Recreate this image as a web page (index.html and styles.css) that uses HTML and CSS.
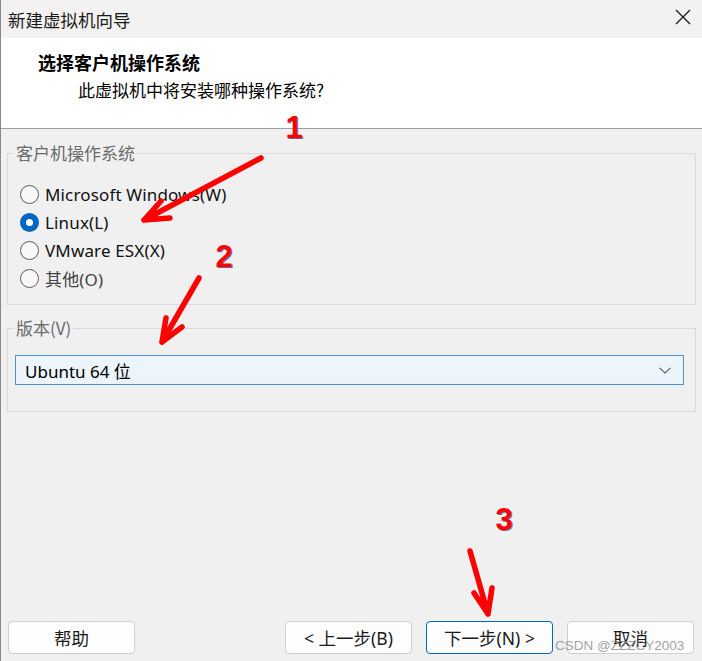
FILE: index.html
```html
<!DOCTYPE html>
<html lang="zh-CN">
<head>
<meta charset="utf-8">
<title>新建虚拟机向导</title>
<link rel="stylesheet" href="styles.css">
</head>
<body>
<div class="window">
  <div class="titlebar">
    <span class="title">新建虚拟机向导</span>
    <svg class="close" width="16" height="16" viewBox="0 0 16 16"><path d="M1 1 L15 15 M15 1 L1 15" stroke="#1e1e1e" stroke-width="1.4" fill="none"/></svg>
  </div>
  <div class="header">
    <div class="h-title">选择客户机操作系统</div>
    <div class="h-sub">此虚拟机中将安装哪种操作系统?</div>
  </div>
  <div class="main">
    <fieldset class="group group-os">
      <legend class="legend">客户机操作系统</legend>
      <div class="options">
        <div class="opt"><span class="radio"></span><span class="opt-text">Microsoft Windows(W)</span></div>
        <div class="opt"><span class="radio checked"></span><span class="opt-text">Linux(L)</span></div>
        <div class="opt"><span class="radio"></span><span class="opt-text">VMware ESX(X)</span></div>
        <div class="opt"><span class="radio"></span><span class="opt-text cjk">其他(O)</span></div>
      </div>
    </fieldset>
    <fieldset class="group group-ver">
      <legend class="legend">版本(V)</legend>
      <div class="ver-body">
        <div class="select">
          <span class="select-text">Ubuntu 64 位</span>
          <svg class="chev" width="12" height="7" viewBox="0 0 12 7"><path d="M0.5 0.8 L6 6 L11.5 0.8" stroke="#5a5a5a" stroke-width="1.1" fill="none"/></svg>
        </div>
      </div>
    </fieldset>
  </div>
  <div class="footer">
    <button class="btn">帮助</button>
    <div class="btn-group">
      <button class="btn">&lt; 上一步(B)</button>
      <button class="btn btn-primary">下一步(N) &gt;</button>
      <button class="btn">取消</button>
    </div>
  </div>
  <svg class="annot" width="702" height="661" viewBox="0 0 702 661">
    <g stroke="#ff0000" stroke-width="5.5" stroke-linecap="round" stroke-linejoin="round" fill="none">
      <path d="M261 158 L144 220 M144 220 L161 201 M144 220 L170 218"/>
      <path d="M199 278 L162 342 M162 342 L166 318 M162 342 L182 327"/>
      <path d="M470 551 L488 614 M488 614 L474 593 M488 614 L492 588"/>
    </g>
    <g class="nums">
      <text x="295" y="139" class="num-sh">1</text>
      <text x="294" y="138" class="num">1</text>
      <text x="225" y="268" class="num-sh">2</text>
      <text x="224" y="267" class="num">2</text>
      <text x="505" y="531" class="num-sh">3</text>
      <text x="504" y="530" class="num">3</text>
    </g>
  </svg>
  <div class="watermark">CSDN @ZZZCY2003</div>
</div>
</body>
</html>
```

FILE: styles.css
```css
html, body {
  margin: 0;
  padding: 0;
}
body {
  width: 702px;
  height: 661px;
  overflow: hidden;
  background: #f0f0f0;
}
.window {
  position: relative;
  box-sizing: border-box;
  width: 702px;
  height: 661px;
  border-left: 1px solid #8a8a8a;
  background: #f0f0f0;
  display: flex;
  flex-direction: column;
  font-family: "Noto Sans", "Noto Sans CJK SC", sans-serif;
  color: #000;
}
.titlebar {
  height: 38px;
  flex: none;
  background: #f3f2f0;
  display: flex;
  align-items: center;
  justify-content: space-between;
  padding: 0 11px 0 7px;
}
.title {
  font-family: "Noto Sans CJK SC", sans-serif;
  font-size: 17.5px;
  color: #1a1a1a;
}
.close {
  display: block;
  margin-top: -4px;
}
.header {
  box-sizing: border-box;
  height: 91px;
  flex: none;
  background: #fff;
  border-bottom: 1px solid #a0a0a0;
  padding: 12px 0 0 37px;
}
.h-title {
  font-family: "Noto Sans CJK SC", sans-serif;
  font-weight: 700;
  font-size: 18px;
  line-height: 24px;
}
.h-sub {
  font-family: "Noto Sans CJK SC", sans-serif;
  font-size: 17px;
  line-height: 24px;
  margin: 4px 0 0 40px;
}
.main {
  flex: 1;
  padding: 0 6px;
}
.group {
  margin: 0;
  padding: 0;
  border: 1px solid #d9d9d9;
  min-inline-size: 0;
}
.group-os {
  margin-top: 14px;
}
.group-ver {
  margin-top: 13px;
}
.legend {
  margin-left: 6px;
  padding: 0 2px;
  font-family: "Noto Sans CJK SC", sans-serif;
  font-size: 17px;
  line-height: 20px;
  color: #6b6b6b;
}
.options {
  padding: 17px 0 12px 12px;
}
.opt {
  height: 28px;
  display: flex;
  align-items: center;
}
.radio {
  box-sizing: border-box;
  width: 19px;
  height: 19px;
  border-radius: 50%;
  border: 1px solid #5c5c5c;
  background: #f8f8f8;
  margin-right: 6px;
  flex: none;
}
.radio.checked {
  border: 6px solid #0067c0;
  background: #fff;
}
.opt-text {
  font-size: 17px;
  letter-spacing: 0.15px;
  color: #111;
}
.opt-text.cjk {
  color: #444;
}
.ver-body {
  padding: 17px 11px 26px 7px;
}
.select {
  box-sizing: border-box;
  height: 30px;
  border: 1px solid #4a94da;
  background: #ecf4fc;
  display: flex;
  align-items: center;
  justify-content: space-between;
  padding: 0 12px 0 9px;
}
.select-text {
  font-size: 17px;
  color: #000;
}
.chev {
  display: block;
}
.footer {
  flex: none;
  display: flex;
  justify-content: space-between;
  padding: 0 8px 7px 7px;
}
.btn-group {
  display: flex;
  gap: 14px;
}
.btn {
  box-sizing: border-box;
  width: 127px;
  height: 33px;
  border: 1px solid #cfcfcf;
  border-radius: 4px;
  background: #fdfdfd;
  font-family: "Noto Sans", "Noto Sans CJK SC", sans-serif;
  font-size: 17.5px;
  color: #1a1a1a;
  padding: 0;
}
.btn-primary {
  border-color: #0067c0;
}
.annot {
  position: absolute;
  left: -1px;
  top: 0;
  pointer-events: none;
}
.num, .num-sh {
  font-family: "Liberation Sans", Arial, sans-serif;
  font-weight: 700;
  font-size: 31px;
  text-anchor: middle;
}
.num {
  fill: #ff0000;
}
.num-sh {
  fill: #24306e;
  opacity: 0.7;
}
.watermark {
  position: absolute;
  left: 554px;
  top: 638px;
  font-family: "Liberation Sans", Arial, sans-serif;
  font-size: 13.5px;
  color: rgba(130, 130, 130, 0.75);
}
```
